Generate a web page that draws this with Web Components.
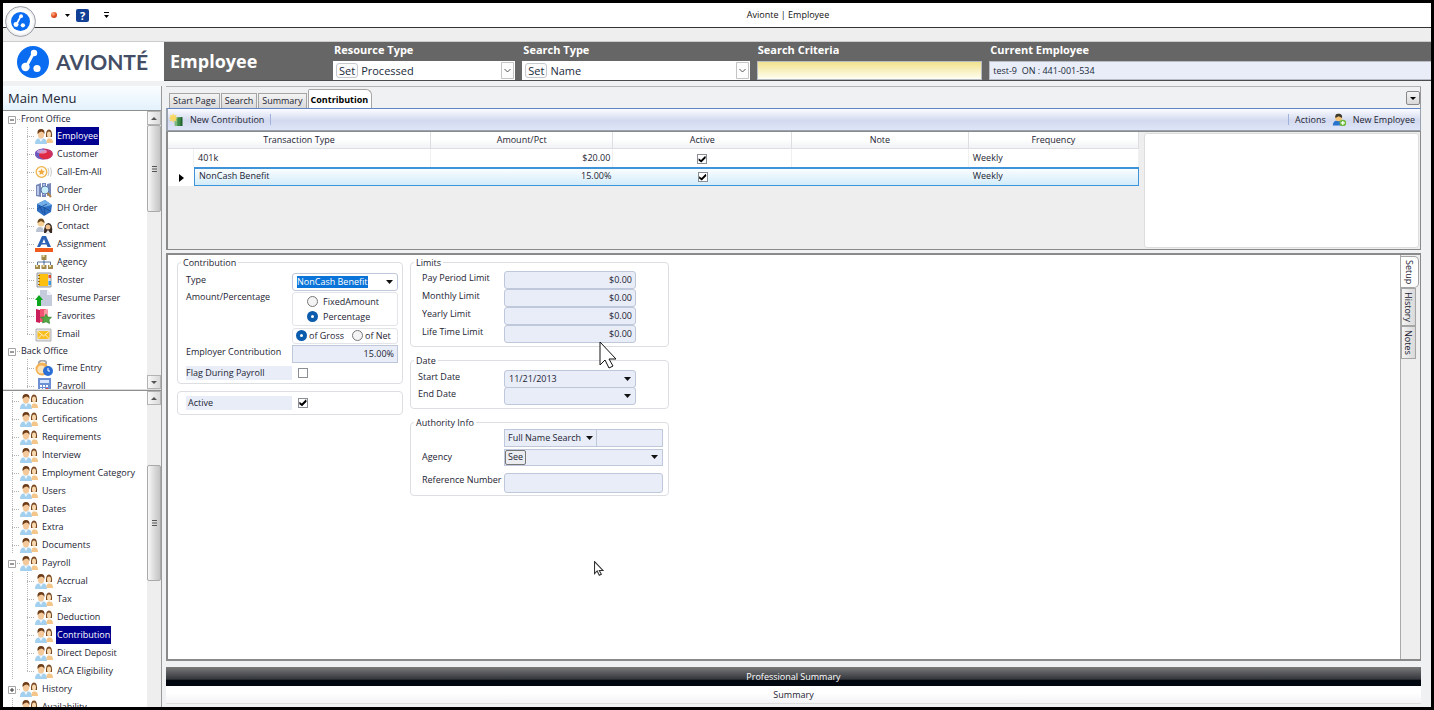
<!DOCTYPE html>
<html lang="en">
<head>
<meta charset="utf-8">
<title>Avionte | Employee</title>
<style>
    html, body { margin: 0; height: 100%; background: #000; }
    body { font: 9px/12px "Open Sans", "Noto Sans", sans-serif; color: #1d2433; }
</style>
</head>
<body>
<app-window>
    <title-bar slot="top">Avionte | Employee</title-bar>
    <search-header slot="top"></search-header>
    <side-menu slot="menu"></side-menu>
    <work-area slot="work"></work-area>
</app-window>

<script>
// Rules every shadow root starts with
const base = `
    *, *::before, *::after { box-sizing: border-box; }
    :host { display: block; min-width: 0; box-sizing: border-box; }
    button, input, select { font: inherit; color: inherit; margin: 0; }
    button { background: none; border: 0; padding: 0; text-align: left; white-space: nowrap; }
    a { color: inherit; text-decoration: none; }
    svg { display: block; flex: none; }
    input[type=checkbox] {
        appearance: none; width: 10px; height: 10px; display: block;
        border: 1px solid #8a8f96; background: #fff;
    }
    input[type=checkbox]:checked::before {
        content: ""; display: block; width: 8px; height: 8px; background: #000;
        clip-path: polygon(5% 40%, 35% 62%, 88% 8%, 95% 38%, 38% 95%, 5% 70%);
    }
`;

const logo = `
    <circle cx="16" cy="16" r="16" fill="#0a6cf1"/>
    <path d="M16.500 7 9 21" stroke="#fff" stroke-width="3"/>
    <circle cx="17" cy="7" r="3.200" fill="#fff"/>
    <circle cx="8.500" cy="21" r="4.200" fill="#fff"/>
    <circle cx="20" cy="22.500" r="3.600" fill="#fff"/>`;

const ICONS = {
    people: `
        <path d="M0 16q0-5.500 4-5.500h4q4 0 4 5.500z" fill="#a3d0ee"/><path d="M4 10.500h4L6 14z" fill="#eef7fd"/>
        <ellipse cx="6" cy="6.500" rx="3.200" ry="4" fill="#f4c99b"/>
        <path d="M2.500 6Q2 1 6 1t3.500 5Q8.500 3.500 6.500 3.500T2.500 6" fill="#6d3d18"/>
        <path d="M11 9q-.500-7.500 3-7.500t3 7.500z" fill="#7a4a22"/>
        <ellipse cx="14" cy="6.500" rx="2" ry="3" fill="#f9d9b0"/>
        <path d="M11.500 15q0-4.500 2-4.500h1.500q3 0 3 4.500z" fill="#f4c68a"/>`,
    customer: `
        <ellipse cx="9" cy="8" rx="9" ry="5.500" fill="#c2356d"/><path d="M9 2.500Q0 3 0 8t9 5.500z" fill="#6a5cc0"/>
        <ellipse cx="10" cy="9" rx="6" ry="4" fill="#e02a45"/><ellipse cx="7" cy="5.500" rx="5" ry="2" fill="#e7b9e2" opacity=".7"/>`,
    call: `
        <circle cx="6.500" cy="8" r="5.300" fill="#fffaf0" stroke="#eeb24a" stroke-width="1.300"/>
        <path d="m6.500 4.500 1 2.300 2.500.2-2 1.700.7 2.400-2.200-1.400-2.100 1.400.6-2.400L3 7l2.500-.2z" fill="#f0a83c"/>
        <path d="M13 4q2 4 0 8M15.500 3.500q2 4.500 0 9" stroke="#c9c9c9" fill="none"/>`,
    order: `
        <path d="M1 3l5-2v14l-5-1zM7 1h4v14H7zM12 2l4-1v12l-4 1z" fill="#7687b8"/>
        <path d="M2 4h2v9H2zM8 2h2v11H8z" fill="#b9c8e8"/>
        <circle cx="10" cy="8" r="4" fill="#c8ecfa" stroke="#5a76a6"/><path d="m12.500 11 3.500 4" stroke="#b08543" stroke-width="2"/>`,
    dh: `
        <path d="M2 4l8-4 7 5-1 7-7 4-7-5z" fill="#2e6fc4"/><path d="M2 4l8-4 7 5-8 2z" fill="#72aee8"/>
        <path d="M4 5l4 8M8 7l7 4M2 9l10-5M9 7l1 8" stroke="#174a93" stroke-width=".8"/>`,
    contact: `
        <path d="M1 14q0-5 4-5t4 5z" fill="#b9c3d2"/><circle cx="6" cy="5" r="3.500" fill="#f5cf93"/><path d="M2.500 5q0-4.500 3.500-4.500T9.500 5L6 3z" fill="#6b4a22"/>
        <path d="M9 15q0-10 4.500-10T17 15z" fill="#3a2a22"/><circle cx="13" cy="9" r="2.500" fill="#f0c18c"/><path d="m10 16 3-4 3 4z" fill="#eee"/>`,
    assignment: `
        <path d="M7 0h4l5 11h-3.500l-1-2.500h-5L5 11H2zM9 3 7.300 7h3.200z" fill="#2b62b5" fill-rule="evenodd"/>
        <path d="M0 12h18v4H0z" fill="#f05a1c"/>`,
    agency: `
        <path d="M9 5v4M2.500 11V8h13v3M9 8v4" stroke="#5574a0" fill="none"/>
        <path d="M6.500 1h5v5h-5zM0 11h5v4H0zM6.500 11h5v4h-5zM13 11h5v4h-5z" fill="#a08a4c"/><path d="M7.500 1h2v2h-2zM1 11h2v2H1zM7.500 11h2v2h-2zM14 11h2v2h-2z" fill="#e9dca6"/>`,
    roster: `
        <path d="M2 1h14v14H2z" fill="#d8dde4" stroke="#9b9b9b"/><path d="M4 2h9v12H4z" fill="#fdc00f"/><path d="M3 3h2v1H3zm0 3h2v1H3zm0 3h2v1H3zm0 3h2v1H3z" fill="#9c6c0c"/>
        <path d="M13.500 3H16v3h-2.500z" fill="#e04a30"/><path d="M13.500 9H16v4h-2.500z" fill="#3b9be0"/>`,
    resume: `
        <path d="M5 0h7l5 5v11H5z" fill="#c3cbdc"/><path d="m12 0 5 5h-5z" fill="#eef1f7"/>
        <path d="M0 10l4-5 4 5H6v6H2v-6z" fill="#0ca51c"/>`,
    favorites: `
        <path d="M1 1l4 1v13l-4-1z" fill="#c81f5b"/><path d="M5 1h6v13H5z" fill="#f25373"/><path d="m9 2 4-1v8H9z" fill="#f79aa6"/>
        <path d="m11 6 1.700 3 3.800.3-2.600 2.500.8 3.700-3.700-1.700L7.500 15l.8-3.400L5.500 9.300 9.500 9z" fill="#54a843" stroke="#2b7a2a" stroke-width=".6"/>`,
    email: `
        <path d="M1 3h15v12H1z" fill="#dfe2e6" stroke="#b3b3b3"/><path d="M2.500 5h12v8h-12z" fill="#fbbf23"/><path d="m2.500 5 6 5 6-5M2.500 13l4-4M14.500 13l-4-4" stroke="#fdeec0" fill="none"/>`,
    time: `
        <path d="M4 5V2q4-3 7 0v3" stroke="#a9a9a9" stroke-width="2" fill="none"/><circle cx="7" cy="9" r="6.500" fill="#f3b155"/><circle cx="6.500" cy="9.500" r="4" fill="#fbe3ba"/>
        <circle cx="13" cy="11" r="5" fill="#2b6fd6"/><path d="M13 8v3h2" stroke="#fff" fill="none"/>`,
    payroll: `
        <path d="M3 0h13v16H3z" fill="#6d8fd4"/><path d="M5 2h9v3H5z" fill="#d7e6fa"/>
        <path d="M5 7h2v2H5zm3 0h2v2H8zm3 0h2v2h-2zM5 10h2v2H5zm3 0h2v2H8z" fill="#fff"/><path d="M11 10h2v2h-2z" fill="#e44"/>`,
    addDoc: `
        <path d="M7 5h9v11H7z" fill="#3b8b46"/><path d="M7 5h3v11H7z" fill="#7dbb7d"/><path d="M14 5h2v11h-2z" fill="#225f31"/>
        <path d="m5 0 1 3 3-1-1 3 3 1-3 1 1 3-3-1-1 3-1-3-3 1 1-3-3-1 3-1-1-3 3 1z" fill="#f8d860"/>`,
    addUser: `
        <path d="M1 15q0-6 6-6t6 6z" fill="#2673cd"/><circle cx="8" cy="6" r="4" fill="#f4c377"/><path d="M4 6q-1-6 5-5 4 1 3 5L8 4z" fill="#3d3a2c"/>
        <circle cx="13" cy="12" r="4" fill="#6cb83c"/><path d="M13 9.500v5M10.500 12h5" stroke="#fff" stroke-width="1.500"/>`
};

class AppIcon extends HTMLElement {
    constructor() {
        super();
        this.attachShadow({ mode: 'open' });
    }
    connectedCallback() {
        this.shadowRoot.innerHTML = `
            <style>${base} :host { flex: none; width: 18px; } svg { width: 100%; }</style>
            <svg viewBox="0 0 18 16" aria-hidden="true">${ICONS[this.getAttribute('name')]}</svg>`;
    }
}
customElements.define('app-icon', AppIcon);

class AppWindow extends HTMLElement {
    constructor() {
        super();
        this.attachShadow({ mode: 'open' }).innerHTML = `
            <style>
                ${base}
                :host { display: flex; flex-direction: column; height: 100vh; border: 3px solid #000; background: #f0f1f2; overflow: hidden; }
                main { flex: 1; min-height: 0; display: flex; gap: 4px; padding: 5px 10px 0 0; }
                ::slotted([slot=menu]) { flex: none; width: 159px; }
                ::slotted([slot=work]) { flex: 1; }
                .pointer { position: absolute; pointer-events: none; }
                .large { left: 599px; top: 341px; width: 19px; }
                .small { left: 594px; top: 561px; width: 10px; }
            </style>
            <slot name="top"></slot>
            <main><slot name="menu"></slot><slot name="work"></slot></main>
            <svg class="pointer large" viewBox="0 0 19 28"><path d="M1 1v23l5-5 4 8 4-2-4-7h7z" fill="#fff" stroke="#111"/></svg>
            <svg class="pointer small" viewBox="0 0 19 28"><path d="M1 1v23l5-5 4 8 4-2-4-7h7z" fill="#fff" stroke="#333" stroke-width="2"/></svg>
        `;
    }
}
customElements.define('app-window', AppWindow);

class TitleBar extends HTMLElement {
    constructor() {
        super();
        this.attachShadow({ mode: 'open' }).innerHTML = `
            <style>
                ${base}
                :host { position: relative; }
                .bar { display: flex; align-items: center; height: 25px; background: #fff; border-bottom: 1px solid #333; }
                .quick { flex: none; width: 142px; padding-left: 48px; display: flex; align-items: center; gap: 6px; }
                .dot { width: 6px; height: 6px; border-radius: 50%; background: radial-gradient(circle at 35% 30%, #ffb38a, #e2501f 50%, #b03412); }
                .caret { margin-left: 2px; }
                .help { width: 13px; height: 13px; border-radius: 2px; background: #123f96; color: #fff; font-weight: 700; font-size: 11px; line-height: 13px; text-align: center; }
                .more { margin-left: 9px; }
                h1 { flex: 1; margin: 0; font-size: 9px; font-weight: 400; text-align: center; color: #111; }
                .strip { height: 14px; background: #eeeeef; border-bottom: 1px solid #ccc; }
                .orb { position: absolute; left: 2px; top: 3px; width: 31px; height: 31px; border-radius: 50%; border: 1px solid #9b9fa6;
                    background: radial-gradient(#fff 55%, #c3c7cc); padding: 5px; }
            </style>
            <div class="bar">
                <div class="quick">
                    <button class="dot" aria-label="Record"></button>
                    <button class="caret" aria-label="Record options"><svg width="5" height="3"><path d="M0 0h5L2.500 3z"/></svg></button>
                    <button class="help">?</button>
                    <button class="more" aria-label="Customize"><svg width="5" height="6"><path d="M0 0h5v1H0zM0 3h5L2.500 6z"/></svg></button>
                </div>
                <h1><slot></slot></h1>
            </div>
            <div class="strip"></div>
            <button class="orb" aria-label="Application menu"><svg width="19" height="19" viewBox="0 0 32 32">${logo}</svg></button>
        `;
    }
}
customElements.define('title-bar', TitleBar);

class SearchHeader extends HTMLElement {
    constructor() {
        super();
        this.attachShadow({ mode: 'open' });
    }

    pick(id, value) {
        return `
            <div class="pick">
                <button class="set">Set</button>
                <div class="drop">
                    <select id="${id}"><option>${value}</option></select>
                    <svg width="13" height="17" viewBox="0 0 13 17"><path d="M.5.5h12v16H.500z" fill="#fdfdfd" stroke="#c4c4c4"/><path d="m3.500 7 3 3 3-3" fill="none" stroke="#555"/></svg>
                </div>
            </div>`;
    }

    connectedCallback() {
        this.shadowRoot.innerHTML = `
            <style>
                ${base}
                :host { display: flex; height: 39px; color: #fff; }
                .brand { flex: none; width: 161px; padding-left: 14px; display: flex; align-items: center; gap: 7px; background: #fff;
                    font: 700 21px/24px Lato, sans-serif; color: #434e66; }
                .fields { flex: 1; min-width: 0; display: grid; grid-template-columns: 162px 182fr 227fr 225fr 441fr; column-gap: 7px;
                    background: #666; border-bottom: 1px solid #4c4c4c; }
                h2 { margin: 0; padding-left: 6px; font-size: 18px; line-height: 38px; }
                .field { display: flex; flex-direction: column; gap: 4px; min-width: 0; }
                .field > label { font-size: 11px; line-height: 15px; font-weight: 700; padding-left: 1px; }
                .pick, .field > input { height: 19px; color: #222b3a; }
                .pick { display: flex; align-items: center; gap: 3px; background: #fff; padding: 1px 1px 1px 3px; font-size: 11px; }
                .set { height: 15px; padding: 0 2px; line-height: 13px; border: 1px solid #c5c8ce; border-radius: 3px; background: #fbfbfc; }
                .drop { flex: 1; display: grid; align-items: center; }
                .drop > * { grid-area: 1 / 1; }
                .drop svg { justify-self: end; pointer-events: none; }
                select { appearance: none; width: 100%; border: 0; background: none; padding: 0; line-height: 16px; }
                input { width: 100%; border: 1px solid #b8bcc4; padding: 0 3px; font-size: 9px; }
                .criteria { background: linear-gradient(#f1e28d, #fffef2); }
                .current { background: #e8edf8; border-right: 0; }
            </style>
            <div class="brand"><svg width="32" height="32" viewBox="0 0 32 32" aria-hidden="true">${logo}</svg>AVIONTÉ</div>
            <div class="fields">
                <h2>Employee</h2>
                <div class="field"><label for="resource">Resource Type</label>${this.pick('resource', 'Processed')}</div>
                <div class="field"><label for="search">Search Type</label>${this.pick('search', 'Name')}</div>
                <div class="field"><label for="criteria">Search Criteria</label><input id="criteria" class="criteria"></div>
                <div class="field"><label for="current">Current Employee</label><input id="current" class="current" value="test-9  ON : 441-001-534" readonly></div>
            </div>
        `;
    }
}
customElements.define('search-header', SearchHeader);

// Scroll track; the thumb sits between the two flexible gaps
class ScrollTrack extends HTMLElement {
    constructor() {
        super();
        this.attachShadow({ mode: 'open' });
    }
    connectedCallback() {
        const before = this.getAttribute('before');
        const thumb = this.getAttribute('thumb');
        const after = this.getAttribute('after');
        const down = this.hasAttribute('open-ended') ? '' : `
            <button class="step" aria-label="Scroll down"><svg width="6" height="3"><path d="M0 0h6L3 3z" fill="#555"/></svg></button>`;
        this.shadowRoot.innerHTML = `
            <style>
                ${base}
                :host { flex: none; width: 14px; display: flex; flex-direction: column; background: #eeeeef; }
                .step { flex: none; width: 14px; height: 14px; display: grid; place-items: center; border: 1px solid #b3b3b3; background: linear-gradient(90deg, #f7f7f7, #d9d9d9); }
                .thumb { flex: ${thumb} 0 0; display: grid; place-items: center; border: 1px solid #a9a9a9; border-radius: 2px; background: linear-gradient(90deg, #f8f8f8, #dcdcdc 50%, #c4c4c4); }
                .before { flex: ${before} 0 0; }
                .after { flex: ${after} 0 0; }
            </style>
            <button class="step" aria-label="Scroll up"><svg width="6" height="3"><path d="M0 3h6L3 0z" fill="#555"/></svg></button>
            <div class="before"></div>
            <div class="thumb"><svg width="5" height="6"><path d="M0 .5h5M0 3h5M0 5.500h5" stroke="#555"/></svg></div>
            <div class="after"></div>
            ${down}
        `;
    }
}
customElements.define('scroll-track', ScrollTrack);

class NavTree extends HTMLElement {
    constructor() {
        super();
        this.attachShadow({ mode: 'open' });
        this.rows = [];
    }

    connectedCallback() { this.render(); }

    render() {
        // each row: [depth, label, icon, flags]
        const rowsHtml = this.rows.map(([depth, label, icon, flags = ''], i) => {
            const next = this.rows[i + 1];
            const last = depth === 1 && next && next[0] === 0 ? 'last' : '';
            let stem = '<i class="line"></i>';
            if (depth === 1) stem += `<i class="line stub inner ${last}"></i>`;
            else if (flags.includes('open') || flags.includes('shut')) {
                stem = `<button class="fold" aria-label="Toggle ${label}"><svg width="9" height="9"><path d="M1.500 1.500h7v7h-7z" fill="#fff" stroke="#a5a5a5"/><path d="M3 5h4${flags.includes('shut') ? 'M5 3v4' : ''}" stroke="#333"/></svg></button><i class="stub tick"></i>`;
            } else stem = '<i class="line stub"></i>';
            return `
                <li class="${icon ? '' : 'group'}">${stem}
                    <a href="#" class="${flags.includes('on') ? 'on' : ''}">${icon ? `<app-icon name="${icon}"></app-icon>` : ''}<span>${label}</span></a>
                </li>`;
        }).join('');

        this.shadowRoot.innerHTML = `
            <style>
                ${base}
                :host { display: flex; background: #fff; border-top: 1px solid #8e8e8e; overflow: hidden; min-height: 0; }
                ul { flex: 1; min-width: 0; margin: 0; padding: var(--tree-top, 0) 0 0; list-style: none; overflow: hidden; }
                li { display: flex; align-items: center; height: 18px; }
                li.group { height: 16px; }
                i { flex: none; align-self: stretch; --across: none; --down: none; background: var(--down), var(--across);
                    background-size: 1px 100%, 100% 1px; background-position: 0 0, 0 50%; background-repeat: no-repeat; }
                .line { width: 8px; margin-left: 9px; --down: repeating-linear-gradient(#b4b4b4 0 1px, transparent 1px 2px); }
                .stub { --across: repeating-linear-gradient(90deg, #b4b4b4 0 1px, transparent 1px 2px); }
                .inner { margin-left: 7px; }
                .last { background-size: 1px 50%, 100% 1px; }
                .tick { width: 3px; }
                .fold { margin-left: 4px; margin-right: 1px; }
                a { display: flex; align-items: center; gap: 3px; height: 100%; white-space: nowrap; }
                span { padding: 0 1px; height: 18px; line-height: 18px; }
                li.group span { height: 16px; line-height: 16px; }
                .on span { background: #000090; color: #fff; }
            </style>
            <ul>${rowsHtml}</ul>
            <slot></slot>
        `;
    }
}
customElements.define('nav-tree', NavTree);

class SideMenu extends HTMLElement {
    constructor() {
        super();
        this.attachShadow({ mode: 'open' });
    }

    connectedCallback() {
        this.shadowRoot.innerHTML = `
            <style>
                ${base}
                :host { display: flex; flex-direction: column; border-right: 1px solid #999; background: #ddd; }
                h2 { flex: none; margin: 0; padding-left: 5px; font-size: 13px; line-height: 24px; font-weight: 400; background: linear-gradient(#fafdff, #e4f2fc); }
                .main { flex: 15 1 0; }
                .sub { flex: 17 1 0; margin-top: 1px; --tree-top: 1px; }
            </style>
            <h2>Main Menu</h2>
            <nav-tree class="main"><scroll-track before="0" thumb="86" after="165"></scroll-track></nav-tree>
            <nav-tree class="sub"><scroll-track before="60" thumb="115" after="127" open-ended></scroll-track></nav-tree>
        `;
        const main = this.shadowRoot.querySelector('.main');
        main.rows = [
            [0, 'Front Office', '', 'open'],
            [1, 'Employee', 'people', 'on'],
            [1, 'Customer', 'customer'],
            [1, 'Call-Em-All', 'call'],
            [1, 'Order', 'order'],
            [1, 'DH Order', 'dh'],
            [1, 'Contact', 'contact'],
            [1, 'Assignment', 'assignment'],
            [1, 'Agency', 'agency'],
            [1, 'Roster', 'roster'],
            [1, 'Resume Parser', 'resume'],
            [1, 'Favorites', 'favorites'],
            [1, 'Email', 'email'],
            [0, 'Back Office', '', 'open'],
            [1, 'Time Entry', 'time'],
            [1, 'Payroll', 'payroll']
        ];
        main.render();
        const sub = this.shadowRoot.querySelector('.sub');
        sub.rows = [
            ...['Education', 'Certifications', 'Requirements', 'Interview', 'Employment Category', 'Users', 'Dates', 'Extra', 'Documents'].map(t => [0, t, 'people']),
            [0, 'Payroll', 'people', 'open'],
            [1, 'Accrual', 'people'],
            [1, 'Tax', 'people'],
            [1, 'Deduction', 'people'],
            [1, 'Contribution', 'people', 'on'],
            [1, 'Direct Deposit', 'people'],
            [1, 'ACA Eligibility', 'people'],
            [0, 'History', 'people', 'shut'],
            [0, 'Availability', 'people']
        ];
        sub.render();
    }
}
customElements.define('side-menu', SideMenu);

class TransactionGrid extends HTMLElement {
    constructor() {
        super();
        this.attachShadow({ mode: 'open' }).innerHTML = `
            <style>
                ${base}
                :host { display: flex; gap: 4px; background: #eeeeef; }
                .list { flex: 974 1 0; }
                .preview { flex: 274 1 0; margin: 1px; background: #fff; border: 1px solid #ddd; border-radius: 3px; }
                table { width: 100%; table-layout: fixed; border-collapse: separate; border-spacing: 0; background: #fff; }
                th { height: 17px; padding: 0; font-weight: 400; line-height: 16px; background: linear-gradient(#fff 45%, #f1f2f4); border: solid #dcdee2; border-width: 0 1px 1px 0; }
                td { height: 18px; padding: 0 4px; line-height: 12px; border-right: 1px solid #f0f0f0; }
                td.num { text-align: right; padding-right: 2px; }
                td input { margin: 2px auto 0; }
                .on td { height: 19px; padding-bottom: 2px; background: linear-gradient(#fafdff, #d2ecfa); border: solid #3f93d8; border-width: 2px 0 1px; }
                .on td:nth-child(2) { border-left-width: 1px; }
                .on td:last-child { border-right-width: 1px; }
                .on td.mark { background: none; border: 0; }
                .mark svg { margin: 4px 0 0 7px; }
            </style>
            <div class="list">
                <table>
                    <colgroup><col style="width:26px"><col style="width:24.400%"><col style="width:18.800%"><col style="width:18.400%"><col style="width:18.200%"><col></colgroup>
                    <thead><tr><th colspan="2">Transaction Type</th><th>Amount/Pct</th><th>Active</th><th>Note</th><th>Frequency</th></tr></thead>
                    <tbody>
                        <tr><td class="mark"></td><td>401k</td><td class="num">$20.00</td><td><input type="checkbox" aria-label="401k active" checked></td><td></td><td>Weekly</td></tr>
                        <tr class="on"><td class="mark"><svg width="5" height="8"><path d="M0 0v8l5-4z"/></svg></td><td>NonCash Benefit</td><td class="num">15.00%</td><td><input type="checkbox" aria-label="NonCash Benefit active" checked></td><td></td><td>Weekly</td></tr>
                    </tbody>
                </table>
            </div>
            <div class="preview"></div>
        `;
    }
}
customElements.define('transaction-grid', TransactionGrid);

class GroupBox extends HTMLElement {
    constructor() {
        super();
        this.attachShadow({ mode: 'open' });
    }
    connectedCallback() {
        const title = this.getAttribute('title-text');
        this.shadowRoot.innerHTML = `
            <style>
                ${base}
                fieldset { margin: 0; min-width: 0; border: 1px solid #dcdee2; border-radius: 4px; padding: var(--box-pad, 2px 5px 4px 11px); }
                legend { margin-left: var(--legend-shift, -8px); padding: 0 2px; line-height: 12px; }
            </style>
            <fieldset>${title ? `<legend>${title}</legend>` : ''}<slot></slot></fieldset>
        `;
    }
}
customElements.define('group-box', GroupBox);

class ContributionForm extends HTMLElement {
    constructor() {
        super();
        this.attachShadow({ mode: 'open' });
    }

    drop(id, value, extra = '') {
        return `
            <div class="drop ${extra}">
                <select id="${id}" aria-label="${value || id}"><option>${value}</option></select>
                <svg width="7" height="4"><path d="M0 0h7L3.500 4z" fill="#111"/></svg>
            </div>`;
    }

    connectedCallback() {
        const limits = ['Pay Period Limit', 'Monthly Limit', 'Yearly Limit', 'Life Time Limit'];
        const limitsHtml = limits.map((name, i) =>
            `<label for="limit${i}">${name}</label><input class="box" id="limit${i}" value="$0.00">`).join('');

        this.shadowRoot.innerHTML = `
            <style>
                ${base}
                :host { display: flex; align-items: flex-start; gap: 7px; padding: 2px 9px; background: #fff; }
                .column { display: flex; flex-direction: column; }
                .first { width: 226px; gap: 7px; }
                .second { width: 259px; gap: 8px; }
                .grid { display: grid; align-items: start; }
                .contribution { --box-pad: 4px 5px 3px 8px; --legend-shift: -5px; }
                .contribution .grid { grid-template-columns: 106px 106px; }
                .grid label { line-height: 14px; }
                .limits .grid { grid-template-columns: 82px 132px; grid-auto-rows: 18px; }
                .limits { --box-pad: 2px 5px 3px 11px; }
                .date { --box-pad: 3px 5px 3px 7px; --legend-shift: -4px; }
                .date .grid { grid-template-columns: 86px 132px; grid-auto-rows: 17px; padding-bottom: 1px; }
                .authority { --box-pad: 0 5px 2px 11px; }
                .authority .grid { grid-template-columns: 82px 159px; row-gap: 2px; align-items: center; }
                .box, .drop { width: 100%; height: 18px; border: 1px solid #bfc7da; border-radius: 3px; background: #e8edf8; }
                .box { padding: 0 3px; text-align: right; }
                .drop { display: grid; align-items: center; padding: 0 4px; }
                .drop > * { grid-area: 1 / 1; }
                .drop svg { justify-self: end; pointer-events: none; }
                .drop select { appearance: none; width: 100%; border: 0; padding: 0; background: none; }
                .square { border-radius: 0; }
                .type { background: #fff; grid-template-columns: auto 1fr; }
                .type select { grid-area: 1 / 1; background: #0a74d8; color: #fff; line-height: 12px; width: auto; }
                .type svg { grid-area: 1 / 2; }
                .choices { border: 1px solid #e3e4e8; border-radius: 3px; display: flex; }
                .amount { flex-direction: column; padding: 1px 14px; margin-top: 1px; }
                .basis { gap: 8px; padding: 0 3px; margin: 2px 0 1px; }
                .choices label { display: flex; align-items: center; gap: 5px; white-space: nowrap; }
                .amount label { line-height: 15px; }
                .basis label { gap: 2px; }
                input[type=radio] { appearance: none; width: 11px; height: 11px; flex: none; border: 1px solid #777; border-radius: 50%; background: #f4f4f4; }
                input[type=radio]:checked { border: 4px solid #0b5cad; background: #fff; }
                .tinted { background: #e8edf8; }
                .flag { margin-top: 3px; }
                .flag + input, .active input { margin-left: 6px; }
                .flag + input { margin-top: 5px; }
                .active { --box-pad: 4px 5px 4px 8px; }
                .active .row { display: grid; grid-template-columns: 106px auto; align-items: center; }
                .active label { line-height: 14px; padding-left: 2px; }
                .lookup, .agency { display: flex; align-items: center; }
                .lookup .drop { width: 93px; padding: 0 3px; }
                .lookup .box { flex: 1; min-width: 0; border-radius: 0; border-left: 0; }
                .agency { border: 1px solid #bfc7da; background: #e8edf8; height: 17px; }
                .agency .drop { flex: 1; border: 0; height: 15px; background: none; }
                .see { height: 15px; padding: 0 2px; line-height: 12px; border: 1px solid #777; border-radius: 2px; background: #eaecf0; }
                .reference { margin-top: 5px; height: 20px; }
            </style>
            <div class="column first">
                <group-box class="contribution" title-text="Contribution">
                    <div class="grid">
                        <label for="type">Type</label>${this.drop('type', 'NonCash Benefit', 'type')}
                        <span>Amount/Percentage</span>
                        <div>
                            <div class="choices amount">
                                <label><input type="radio" name="amount">FixedAmount</label>
                                <label><input type="radio" name="amount" checked>Percentage</label>
                            </div>
                            <div class="choices basis">
                                <label><input type="radio" name="basis" checked>of Gross</label>
                                <label><input type="radio" name="basis">of Net</label>
                            </div>
                        </div>
                        <label for="employer">Employer Contribution</label><input class="box square" id="employer" value="15.00%">
                        <label class="tinted flag" for="flag">Flag During Payroll</label><input type="checkbox" id="flag">
                    </div>
                </group-box>
                <group-box class="active">
                    <div class="row"><label class="tinted" for="active">Active</label><input type="checkbox" id="active" checked></div>
                </group-box>
            </div>
            <div class="column second">
                <group-box class="limits" title-text="Limits"><div class="grid">${limitsHtml}</div></group-box>
                <group-box class="date" title-text="Date">
                    <div class="grid">
                        <label for="start">Start Date</label>${this.drop('start', '11/21/2013')}
                        <label for="end">End Date</label>${this.drop('end', '')}
                    </div>
                </group-box>
                <group-box class="authority" title-text="Authority Info">
                    <div class="grid">
                        <span></span>
                        <div class="lookup">${this.drop('mode', 'Full Name Search', 'square')}<input class="box" aria-label="Name"></div>
                        <label for="agency">Agency</label>
                        <div class="agency"><button class="see">See</button>${this.drop('agency', '')}</div>
                        <label for="reference">Reference Number</label><input class="box reference" id="reference">
                    </div>
                </group-box>
            </div>
        `;
    }
}
customElements.define('contribution-form', ContributionForm);

class WorkArea extends HTMLElement {
    constructor() {
        super();
        this.attachShadow({ mode: 'open' }).innerHTML = `
            <style>
                ${base}
                :host { display: flex; flex-direction: column; padding-bottom: 3px; border-top: 1px solid #b4b4b4; }
                .tabs { flex: none; display: flex; align-items: flex-end; gap: 1px; height: 21px; padding: 0 0 0 3px; border-right: 1px solid #999; }
                .tabs > button { height: 15px; padding: 0 3px; border: 1px solid #a5a5a5; border-bottom: 0; background: linear-gradient(#f4f4f4, #d9d9d9); }
                .tabs > .on { height: 19px; padding: 2px 3px 0 2px; background: #fff; font-weight: 700; border-radius: 2px 6px 0 0; color: #000; }
                .tabs > .menu { width: 14px; height: 14px; margin: 0 0 3px auto; padding: 0; border: 1px solid #888; border-radius: 2px; display: grid; place-items: center; }
                .tools { flex: none; display: flex; align-items: center; height: 23px; padding: 0 5px 0 1px; gap: 6px; border: solid #9aa2ae; border-width: 1px 1px 1px 2px; border-top-color: #5f85c4;
                    background: linear-gradient(#fbfcff, #d3daef 55%, #dfe5f8); }
                .tools app-icon { width: 15px; }
                .sep { width: 1px; height: 11px; background: #9fb2dc; }
                .push { margin-left: auto; }
                transaction-grid { flex: 118 1 0; border: solid #8a8a8a; border-width: 1px 1px 1px 2px; }
                .detail { flex: 409 1 0; display: flex; margin-top: 3px; border: solid #8a8a8a; border-width: 2px 1px 2px 2px; background: #fff; }
                contribution-form { flex: 1; }
                .side { width: 20px; display: flex; flex-direction: column; align-items: flex-start; padding-top: 1px; background: #eeeeef; border-left: 1px solid #aaa; }
                .side button { width: 15px; padding: 3px 0; writing-mode: vertical-rl; line-height: 13px; border: 1px solid #a5a5a5; background: linear-gradient(90deg, #f4f4f4, #d9d9d9); }
                .side .on { width: 18px; background: #fff; border-left: 0; border-radius: 0 5px 5px 0; }
                .summary { flex: none; margin-top: 6px; text-align: center; }
                .summary h3, .summary p { margin: 0; font-size: 9px; font-weight: 400; line-height: 19px; }
                .summary h3 { color: #fff; background: linear-gradient(#7a7a7a, #33363c 65%, #02060f 68%); }
                .summary p { height: 18px; line-height: 18px; background: linear-gradient(#fff 40%, #f2f3f5); border-bottom: 1px solid #ddd; }
            </style>
            <div class="tabs">
                <button>Start Page</button><button>Search</button><button>Summary</button><button class="on">Contribution</button>
                <button class="menu" aria-label="Open tabs"><svg width="6" height="3"><path d="M0 0h6L3 3z"/></svg></button>
            </div>
            <div class="tools">
                <app-icon name="addDoc"></app-icon><button>New Contribution</button><span class="sep"></span>
                <span class="sep push"></span><button>Actions</button><app-icon name="addUser"></app-icon><button>New Employee</button>
            </div>
            <transaction-grid></transaction-grid>
            <div class="detail">
                <contribution-form></contribution-form>
                <div class="side"><button class="on">Setup</button><button>History</button><button>Notes</button></div>
            </div>
            <div class="summary"><h3>Professional Summary</h3><p>Summary</p></div>
        `;
    }
}
customElements.define('work-area', WorkArea);
</script>
</body>
</html>
